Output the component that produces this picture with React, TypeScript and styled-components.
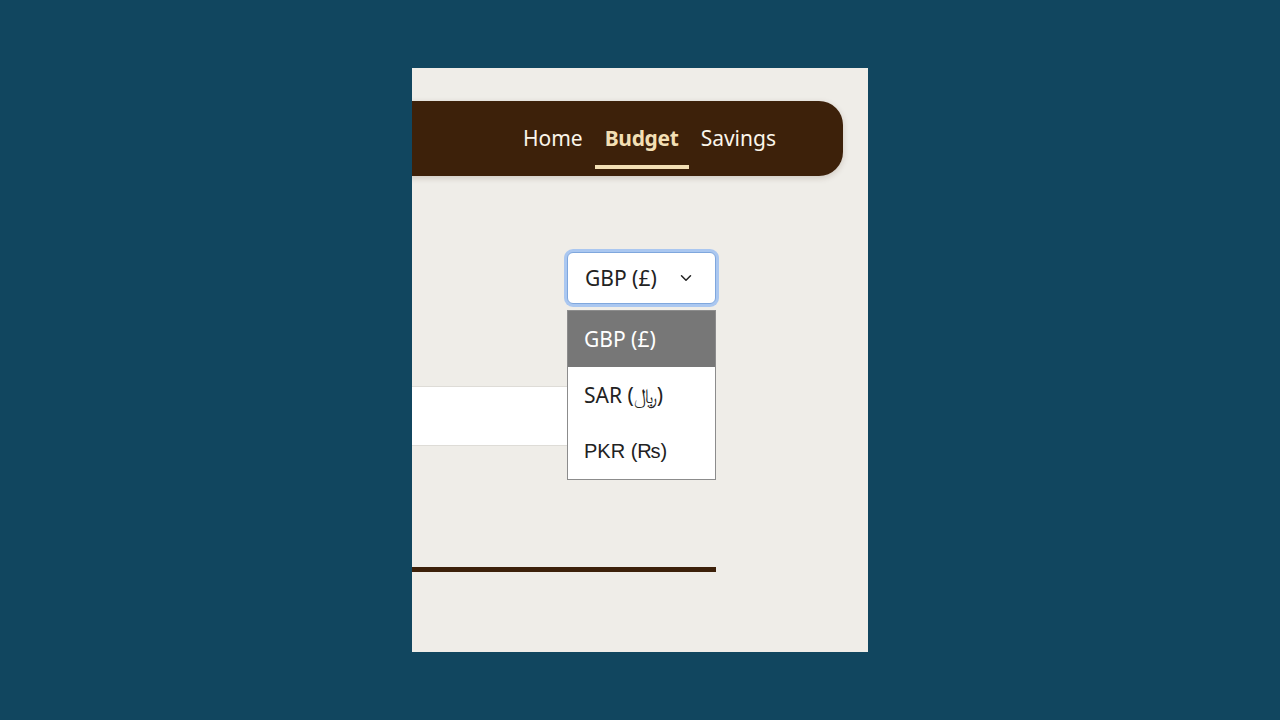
import React from "react";
import styled, { createGlobalStyle } from "styled-components";

const GlobalStyle = createGlobalStyle`
  html, body { margin: 0; padding: 0; }
  body {
    background: #11465f;
    font-family: "Noto Sans", "Open Sans", sans-serif;
  }
`;

const Stage = styled.div`
  height: 100vh;
  display: flex;
  align-items: center;
  justify-content: center;
`;

const Panel = styled.div`
  width: 456px;
  height: 584px;
  background: #efede8;
  overflow: hidden;
  display: flex;
  flex-direction: column;
`;

const NavBar = styled.nav`
  margin: 33px 25px 0 -60px;
  height: 75px;
  background: #3d210a;
  border-radius: 0 24px 24px 0;
  box-shadow: 0 2px 6px rgba(60, 33, 10, 0.18);
  display: flex;
  align-items: center;
  justify-content: flex-end;
  gap: 2px;
  padding-right: 57px;
`;

const NavLink = styled.a<{ $active?: boolean }>`
  font-size: 21px;
  line-height: 29px;
  padding: 16px 10px 12px;
  border-bottom: 4px solid ${(p) => (p.$active ? "#f3dfb4" : "transparent")};
  color: ${(p) => (p.$active ? "#f3dfb4" : "#fbf5ea")};
  font-weight: ${(p) => (p.$active ? 700 : 400)};
  letter-spacing: ${(p) => (p.$active ? "-0.3px" : "0")};
  text-decoration: none;
`;

const Content = styled.div`
  margin: 0 152px 0 -60px;
  display: flex;
  flex-direction: column;
`;

const SelectRow = styled.div`
  margin-top: 76px;
  display: flex;
  justify-content: flex-end;
  position: relative;
  z-index: 2;
`;

const SelectWrap = styled.div`
  position: relative;
  width: 149px;
`;

const SelectBox = styled.div`
  height: 52px;
  box-sizing: border-box;
  background: #fff;
  border: 1px solid #7fa7dd;
  border-radius: 6px;
  box-shadow: 0 0 0 3px #aac7f0;
  display: flex;
  align-items: center;
  justify-content: space-between;
  padding: 0 20px 0 17px;
  font-size: 21px;
  color: #222;
`;

const Chevron = () => (
  <svg width="18" height="18" viewBox="0 0 24 24" fill="none" stroke="#222" strokeWidth="2" strokeLinecap="round" strokeLinejoin="round">
    <path d="M6 9l6 6 6-6" />
  </svg>
);

const OptionList = styled.ul`
  position: absolute;
  top: 58px;
  left: 0;
  width: 149px;
  box-sizing: border-box;
  margin: 0;
  padding: 0;
  list-style: none;
  background: #fff;
  border: 1px solid #8c8c8c;
`;

const Option = styled.li<{ $selected?: boolean; $alt?: boolean }>`
  height: 56px;
  display: flex;
  align-items: center;
  padding-left: 16px;
  font-size: ${(p) => (p.$alt ? "20px" : "21px")};
  font-family: ${(p) => (p.$alt ? '"Liberation Sans", "DejaVu Sans", sans-serif' : '"Noto Sans", "DejaVu Sans", sans-serif')};
  background: ${(p) => (p.$selected ? "#777777" : "#fff")};
  color: ${(p) => (p.$selected ? "#fff" : "#222")};
`;

const InputStrip = styled.div`
  margin-top: 82px;
  height: 58px;
  background: #fff;
  border-top: 1px solid #dedcd7;
  border-bottom: 1px solid #dedcd7;
`;

const Divider = styled.div`
  margin-top: 121px;
  height: 5px;
  background: #3d210a;
`;

export default function App() {
  return (
    <>
      <GlobalStyle />
      <Stage>
        <Panel>
          <NavBar>
            <NavLink href="#">Home</NavLink>
            <NavLink href="#" $active>
              Budget
            </NavLink>
            <NavLink href="#">Savings</NavLink>
          </NavBar>
          <Content>
            <SelectRow>
              <SelectWrap>
                <SelectBox>
                  <span>GBP (£)</span>
                  <Chevron />
                </SelectBox>
                <OptionList>
                  <Option $selected>GBP (£)</Option>
                  <Option>SAR (﷼)</Option>
                  <Option $alt>PKR (₨)</Option>
                </OptionList>
              </SelectWrap>
            </SelectRow>
            <InputStrip />
            <Divider />
          </Content>
        </Panel>
      </Stage>
    </>
  );
}
